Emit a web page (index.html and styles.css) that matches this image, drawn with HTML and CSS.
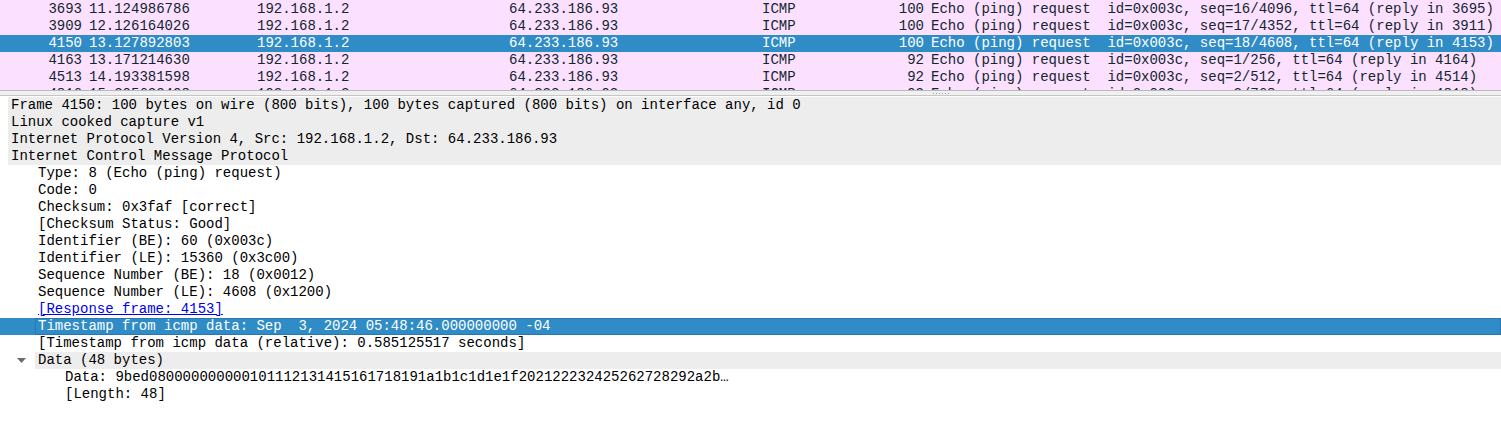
FILE: index.html
```html
<!DOCTYPE html>
<html>
<head>
<meta charset="utf-8">
<link rel="stylesheet" href="styles.css">
</head>
<body>
<div class="app">
  <div class="packet-list">
    <div class="prow"><span class="c-no">3693</span><span class="c">11.124986786</span><span class="c">192.168.1.2</span><span class="c">64.233.186.93</span><span class="c">ICMP</span><span class="c-len">100</span><span class="c-info">Echo (ping) request  id=0x003c, seq=16/4096, ttl=64 (reply in 3695)</span></div>
    <div class="prow"><span class="c-no">3909</span><span class="c">12.126164026</span><span class="c">192.168.1.2</span><span class="c">64.233.186.93</span><span class="c">ICMP</span><span class="c-len">100</span><span class="c-info">Echo (ping) request  id=0x003c, seq=17/4352, ttl=64 (reply in 3911)</span></div>
    <div class="prow sel"><span class="c-no">4150</span><span class="c">13.127892803</span><span class="c">192.168.1.2</span><span class="c">64.233.186.93</span><span class="c">ICMP</span><span class="c-len">100</span><span class="c-info">Echo (ping) request  id=0x003c, seq=18/4608, ttl=64 (reply in 4153)</span></div>
    <div class="prow"><span class="c-no">4163</span><span class="c">13.171214630</span><span class="c">192.168.1.2</span><span class="c">64.233.186.93</span><span class="c">ICMP</span><span class="c-len">92</span><span class="c-info">Echo (ping) request  id=0x003c, seq=1/256, ttl=64 (reply in 4164)</span></div>
    <div class="prow"><span class="c-no">4513</span><span class="c">14.193381598</span><span class="c">192.168.1.2</span><span class="c">64.233.186.93</span><span class="c">ICMP</span><span class="c-len">92</span><span class="c-info">Echo (ping) request  id=0x003c, seq=2/512, ttl=64 (reply in 4514)</span></div>
    <div class="prow"><span class="c-no">4816</span><span class="c">15.205633408</span><span class="c">192.168.1.2</span><span class="c">64.233.186.93</span><span class="c">ICMP</span><span class="c-len">92</span><span class="c-info">Echo (ping) request  id=0x003c, seq=3/768, ttl=64 (reply in 4818)</span></div>
  </div>
  <div class="splitter"><span class="grip"></span></div>
  <div class="details">
    <div class="drow"><span class="ind l0"></span><span class="item shaded">Frame 4150: 100 bytes on wire (800 bits), 100 bytes captured (800 bits) on interface any, id 0</span></div>
    <div class="drow"><span class="ind l0"></span><span class="item shaded">Linux cooked capture v1</span></div>
    <div class="drow"><span class="ind l0"></span><span class="item shaded">Internet Protocol Version 4, Src: 192.168.1.2, Dst: 64.233.186.93</span></div>
    <div class="drow"><span class="ind l0"></span><span class="item shaded">Internet Control Message Protocol</span></div>
    <div class="drow"><span class="ind l1"></span><span class="item">Type: 8 (Echo (ping) request)</span></div>
    <div class="drow"><span class="ind l1"></span><span class="item">Code: 0</span></div>
    <div class="drow"><span class="ind l1"></span><span class="item">Checksum: 0x3faf [correct]</span></div>
    <div class="drow"><span class="ind l1"></span><span class="item">[Checksum Status: Good]</span></div>
    <div class="drow"><span class="ind l1"></span><span class="item">Identifier (BE): 60 (0x003c)</span></div>
    <div class="drow"><span class="ind l1"></span><span class="item">Identifier (LE): 15360 (0x3c00)</span></div>
    <div class="drow"><span class="ind l1"></span><span class="item">Sequence Number (BE): 18 (0x0012)</span></div>
    <div class="drow"><span class="ind l1"></span><span class="item">Sequence Number (LE): 4608 (0x1200)</span></div>
    <div class="drow"><span class="ind l1"></span><span class="item"><span class="link">[Response frame: 4153]</span></span></div>
    <div class="drow sel"><span class="ind l1"></span><span class="item">Timestamp from icmp data: Sep  3, 2024 05:48:46.000000000 -04</span></div>
    <div class="drow"><span class="ind l1"></span><span class="item">[Timestamp from icmp data (relative): 0.585125517 seconds]</span></div>
    <div class="drow"><span class="ind l1 exp"><svg class="tri" width="9" height="5" viewBox="0 0 9 5"><polygon points="0,0 9,0 4.5,5" fill="#6b6b6b"/></svg></span><span class="item shaded">Data (48 bytes)</span></div>
    <div class="drow"><span class="ind l2"></span><span class="item">Data: 9bed080000000000101112131415161718191a1b1c1d1e1f202122232425262728292a2b…</span></div>
    <div class="drow"><span class="ind l2"></span><span class="item">[Length: 48]</span></div>
  </div>
</div>
</body>
</html>
```
FILE: styles.css
```css
html, body {
  margin: 0;
  padding: 0;
  background: #ffffff;
}

.app {
  font-family: "Liberation Mono", "DejaVu Sans Mono", monospace;
  font-size: 14px;
  color: #12181c;
}

.packet-list {
  height: 90px;
  overflow: hidden;
  padding-top: 1px;
  box-sizing: border-box;
  background: #fce0ff;
}

.prow {
  display: grid;
  grid-template-columns: 86px 168px 252px 253px 101px 68px 1fr;
  height: 17px;
  line-height: 17px;
  background: #fce0ff;
  color: #12272e;
  white-space: pre;
}

.prow.sel {
  background: #308cc6;
  color: #ffffff;
}

.prow > span {
  overflow: hidden;
}

.c {
  padding-left: 3px;
}

.c-no,
.c-len {
  text-align: right;
  padding-right: 4px;
}

.c-info {
  padding-left: 3px;
}

.splitter {
  height: 4px;
  border-top: 1px solid #b9b9b9;
  border-bottom: 1px solid #c6c6c6;
  background: #f0f0f0;
  display: flex;
  align-items: center;
  padding-left: 933px;
}

.grip {
  width: 16px;
  height: 1px;
  background: repeating-linear-gradient(to right, #9a9a9a 0 1px, transparent 1px 3px);
}

.details {
  padding-top: 1px;
  color: #000000;
}

.drow {
  display: flex;
  height: 17px;
}

.ind {
  flex: none;
  display: flex;
  align-items: center;
}

.ind.l0 { width: 8px; }
.ind.l1 { width: 35px; }
.ind.l2 { width: 62px; }

.tri {
  margin-left: 17px;
}

.item {
  flex: 1;
  padding-left: 3px;
  line-height: 17px;
  white-space: pre;
}

.item.shaded {
  background: #ededed;
}

.link {
  color: #0000ee;
  text-decoration: underline;
}

.drow.sel {
  background: #308cc6;
  color: #ffffff;
}

.drow.sel .item {
  border: 1px solid #2877ad;
  padding-left: 2px;
  line-height: 15px;
}
```
